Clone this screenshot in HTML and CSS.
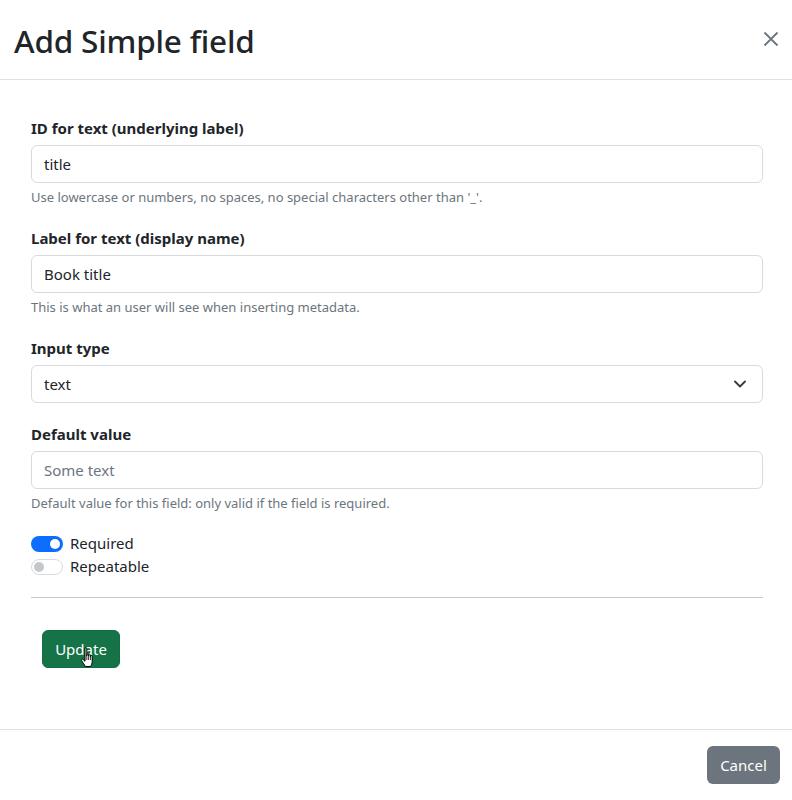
FILE: index.html
```html
<!DOCTYPE html>
<html lang="en">
<head>
<meta charset="utf-8">
<title>Add Simple field</title>
<link rel="stylesheet" href="styles.css">
</head>
<body>
<div class="modal">
  <div class="modal-header">
    <h2 class="modal-title">Add Simple field</h2>
    <button class="btn-close" aria-label="Close">
      <svg width="16" height="16" viewBox="0 0 16 16"><path d="M1.5 1.5 L14.5 14.5 M14.5 1.5 L1.5 14.5" stroke="#6c757d" stroke-width="1.8" fill="none"/></svg>
    </button>
  </div>
  <div class="modal-body">
    <div class="group">
      <label class="form-label">ID for text (underlying label)</label>
      <div class="form-control">title</div>
      <div class="form-text">Use lowercase or numbers, no spaces, no special characters other than '_'.</div>
    </div>
    <div class="group">
      <label class="form-label">Label for text (display name)</label>
      <div class="form-control">Book title</div>
      <div class="form-text">This is what an user will see when inserting metadata.</div>
    </div>
    <div class="group">
      <label class="form-label">Input type</label>
      <div class="form-control form-select">
        <span>text</span>
        <svg width="12" height="8" viewBox="0 0 12 8"><path d="M1 1.5 L6 6.5 L11 1.5" stroke="#343a40" stroke-width="1.8" fill="none" stroke-linecap="round" stroke-linejoin="round"/></svg>
      </div>
    </div>
    <div class="group">
      <label class="form-label">Default value</label>
      <div class="form-control placeholder">Some text</div>
      <div class="form-text">Default value for this field: only valid if the field is required.</div>
    </div>
    <div class="switches">
      <div class="switch-row">
        <span class="switch on"><span class="knob"></span></span>
        <span class="switch-label">Required</span>
      </div>
      <div class="switch-row">
        <span class="switch off"><span class="knob"></span></span>
        <span class="switch-label">Repeatable</span>
      </div>
    </div>
    <hr class="divider">
    <div class="actions">
      <button class="btn btn-success">Update
        <svg class="cursor" width="16" height="22" viewBox="0 0 16 22"><path d="M5 1.5 C5 0.7 6.8 0.7 6.8 1.5 L6.8 9 L6.8 7.6 C6.8 6.8 8.6 6.8 8.6 7.6 L8.6 9.2 L8.6 8.4 C8.6 7.6 10.4 7.6 10.4 8.4 L10.4 9.8 L10.4 9.2 C10.4 8.4 12.2 8.4 12.2 9.2 L12.2 14.5 C12.2 17 11 18.5 10.5 19.5 L5.5 19.5 C4.6 18 3 16 1.6 13.6 C1 12.6 2.2 11.6 3 12.4 L5 14.3 Z" fill="#fff" stroke="#000" stroke-width="1" stroke-linejoin="round"/><path d="M6.8 9 L6.8 13 M8.6 9.2 L8.6 13 M10.4 9.8 L10.4 13" stroke="#000" stroke-width="0.8"/></svg>
      </button>
    </div>
  </div>
  <div class="modal-footer">
    <button class="btn btn-secondary">Cancel</button>
  </div>
</div>
</body>
</html>
```
FILE: styles.css
```css
* { box-sizing: border-box; }
html, body {
  margin: 0;
  padding: 0;
  background: #fff;
}
body {
  font-family: "Noto Sans", "Open Sans", sans-serif;
  color: #212529;
  font-size: 15px;
  line-height: 1.5;
}
.modal {
  width: 792px;
  height: 800px;
  display: flex;
  flex-direction: column;
}
.modal-header {
  height: 80px;
  border-bottom: 1px solid #dee2e6;
  display: flex;
  align-items: center;
  justify-content: space-between;
  padding: 0 12px 0 14px;
}
.modal-title {
  margin: 0;
  font-size: 31.5px;
  font-weight: 500;
  line-height: 1.2;
  letter-spacing: -0.2px;
  padding-top: 2px;
}
.btn-close {
  border: 0;
  background: transparent;
  padding: 0;
  width: 18px;
  height: 18px;
  display: flex;
  align-items: center;
  justify-content: center;
  margin-top: -2px;
}
.modal-body {
  flex: 1;
  padding: 37px 29px 0 31px;
}
.group {
  margin-bottom: 20px;
}
.form-label {
  display: block;
  font-weight: 700;
  font-size: 15px;
  line-height: 22px;
  margin-bottom: 6px;
}
.form-control {
  height: 38px;
  border: 1px solid #d7dbe0;
  border-radius: 6px;
  padding: 0 12px;
  display: flex;
  align-items: center;
  font-size: 15px;
}
.form-select {
  justify-content: space-between;
  padding-right: 16px;
}
.placeholder { color: #6c757d; }
.form-text {
  margin-top: 5px;
  font-size: 13px;
  line-height: 19px;
  color: #6c757d;
}
.switch-row {
  display: flex;
  align-items: center;
  height: 23px;
}
.switches {
  margin-top: -1px;
}
.switch {
  width: 32px;
  height: 16px;
  border-radius: 8px;
  display: flex;
  align-items: center;
  padding: 0 3px;
  margin-right: 7px;
}
.switch.on {
  background: #0d6efd;
  justify-content: flex-end;
}
.switch.off {
  background: #fff;
  border: 1px solid #d7dbe0;
  padding: 0 2px;
}
.knob {
  width: 10px;
  height: 10px;
  border-radius: 50%;
  background: #fff;
}
.switch.off .knob { background: #c4c8cc; }
.switch-label {
  font-size: 15px;
}
.divider {
  border: 0;
  border-top: 1px solid #c6c9cc;
  margin: 19px 0 32px;
}
.actions {
  padding-left: 11px;
}
.btn {
  font-family: inherit;
  font-size: 15px;
  line-height: 22px;
  border-radius: 6px;
  color: #fff;
  border: 1px solid transparent;
  height: 38px;
  padding: 0 12px;
}
.btn-success {
  position: relative;
  background: #157347;
  border-color: #146c43;
  width: 78px;
}
.cursor {
  position: absolute;
  left: 37px;
  top: 16px;
}
.btn-secondary {
  background: #6c757d;
  width: 73px;
}
.modal-footer {
  height: 71px;
  border-top: 1px solid #dee2e6;
  display: flex;
  justify-content: flex-end;
  align-items: flex-start;
  padding: 16px 12px 0 0;
}
```
